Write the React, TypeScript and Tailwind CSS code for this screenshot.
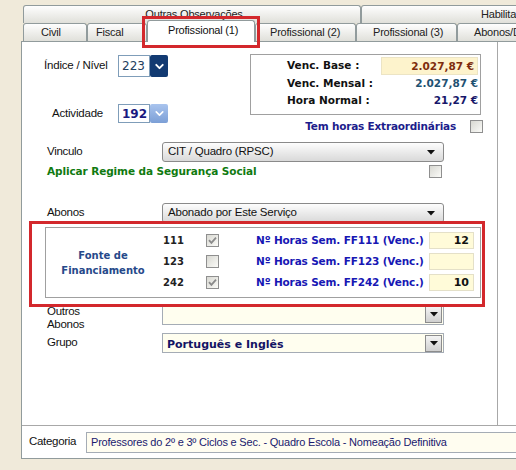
import { ChevronDown } from 'lucide-react'

const sans = "font-['Liberation_Sans',Arial,sans-serif]"
const bold = "font-['DejaVu_Sans',Verdana,sans-serif] font-bold"

function Check({ checked }: { checked?: boolean }) {
  return (
    <div className="w-[13px] h-[13px] shrink-0 border border-[#8f8f8f] bg-linear-to-br from-[#d8d8d2] to-[#fbfbf8] flex items-center justify-center">
      {checked && (
        <svg width="9" height="9" viewBox="0 0 9 9">
          <path d="M1 4.2 L3.4 6.8 L8 1.6" stroke="#8a8a8a" strokeWidth="1.8" fill="none" />
        </svg>
      )}
    </div>
  )
}

function Tri() {
  return (
    <svg width="8" height="5" viewBox="0 0 8 5">
      <path d="M0 0 H8 L4 4.5 Z" fill="#111" />
    </svg>
  )
}

// rounded XP-style combo (Vinculo / Abonos)
function XpCombo({ text }: { text: string }) {
  return (
    <div className={`w-[282px] h-full rounded-[3px] border border-[#8a8a8a] bg-linear-to-b from-[#fdfdfd] to-[#d9d9d9] flex items-center pl-[5px] pr-[8px] text-[11.5px] tracking-[-0.2px] text-[#111] ${sans}`}>
      <span className="flex-1">{text}</span>
      <Tri />
    </div>
  )
}

// flat combo with square button (Outros Abonos / Grupo)
function FlatCombo({ children }: { children?: React.ReactNode }) {
  return (
    <div className="w-[282px] h-full border border-[#a5acb5] bg-[#fffeef] flex items-center pl-[4px] pr-[1px]">
      <div className="flex-1">{children}</div>
      <div className="w-[17px] h-[17px] border border-[#8c8c8c] bg-linear-to-b from-[#f4f4f4] to-[#d0d0d0] flex items-center justify-center">
        <Tri />
      </div>
    </div>
  )
}

function Tab({ label, w, pl }: { label: string; w: string; pl: string }) {
  return (
    <div className={`${w} ${pl} h-full shrink-0 border border-b-0 border-[#919b9c] rounded-t-[3px] bg-linear-to-b from-[#fefefe] to-[#e0e0da] text-[11px] tracking-[-0.2px] text-[#222] leading-[17px] whitespace-nowrap`}>
      {label}
    </div>
  )
}

function HoursRow({ ff, checked, value }: { ff: string; checked: boolean; value: string }) {
  return (
    <div className="flex items-center h-[21px]">
      <span className={`w-[46px] pl-[3px] text-[10px] text-[#222] ${bold}`}>{ff}</span>
      <Check checked={checked} />
      <span className={`ml-[37px] w-[173px] text-[10.5px] tracking-[-0.15px] text-[#1717b4] ${bold}`}>Nº Horas Sem. FF{ff} (Venc.)</span>
      <div className={`w-[45px] h-[17px] border border-[#e4e0c8] bg-[#fffbd9] text-right pr-[4px] text-[11px] leading-[15px] text-[#111] ${bold}`}>{value}</div>
    </div>
  )
}

export default function App() {
  return (
    <div className={`w-[516px] h-[470px] overflow-hidden bg-[#f0eada] pt-[5px] pl-[21px] ${sans}`}>
      {/* back tab row */}
      <div className="flex h-[18px] pl-[2px]">
        <div className="w-[338px] shrink-0 border border-b-0 border-[#919b9c] rounded-t-[3px] bg-linear-to-b from-[#fefefe] to-[#e0e0da] text-center text-[11px] tracking-[-0.2px] leading-[16px] text-[#222] pl-[4px]">
          Outras Observações
        </div>
        <div className="w-[338px] shrink-0 border border-b-0 border-[#919b9c] rounded-t-[3px] bg-linear-to-b from-[#fefefe] to-[#e0e0da] text-[11px] tracking-[-0.2px] leading-[16px] text-[#222] pl-[119px]">
          Habilitações
        </div>
      </div>
      {/* front tab row */}
      <div className="flex h-[18px] pl-[2px]">
        <Tab label="Civil" w="w-[64px]" pl="pl-[17px]" />
        <Tab label="Fiscal" w="w-[60px]" pl="pl-[8px]" />
        <div className="relative z-10 -mt-[3px] h-[22px] w-[108px] shrink-0 border border-b-0 border-[#919b9c] rounded-t-[3px] bg-white pl-[20px] text-[11px] tracking-[-0.2px] leading-[19px] text-[#111]">
          Profissional (1)
          <div className="absolute -left-[6px] -right-[6px] -top-[5px] -bottom-[6px] border-[3px] border-[#d3282c]" />
        </div>
        <Tab label="Profissional (2)" w="w-[101px]" pl="pl-[14px]" />
        <Tab label="Profissional (3)" w="w-[101px]" pl="pl-[16px]" />
        <Tab label="Abonos/Descontos" w="w-[101px]" pl="pl-[16px]" />
      </div>

      {/* panel */}
      <div className="w-[520px] h-[418px] border border-[#919b9c] bg-white flex flex-col">
        <div className="h-[384px] border-b border-[#a8a8a8] flex">
          <div className="relative w-[476px] h-full border-r border-[#a8a8a8]">
            {/* indice / actividade + vencimentos */}
            <div className="flex items-start h-[61px] mt-[12px]">
              <div className="w-[228px]">
                <div className="flex items-center h-[22px] mt-[1px]">
                  <span className="w-[96px] pl-[22px] text-[11.5px] tracking-[-0.2px] text-[#111]">Índice / Nível</span>
                  <div className="w-[32px] h-full border border-[#7f9db9] flex items-center pl-[3px] text-[12px] text-[#23405e] font-['DejaVu_Sans',sans-serif]">223</div>
                  <div className="w-[18px] h-full bg-[#123a72] rounded-[2px] flex items-center justify-center">
                    <ChevronDown size={13} color="#fff" strokeWidth={3.5} />
                  </div>
                </div>
                <div className="flex items-center h-[19px] mt-[27px]">
                  <span className="w-[96px] pl-[30px] text-[11.5px] tracking-[-0.2px] text-[#111]">Actividade</span>
                  <div className={`w-[32px] h-full border border-[#7f9db9] flex items-center pl-[3px] text-[12px] text-[#1a1a80] ${bold}`}>192</div>
                  <div className="w-[18px] h-full bg-linear-to-b from-[#a9c4ee] to-[#7c9fd6] rounded-[2px] flex items-center justify-center">
                    <ChevronDown size={13} color="#fff" strokeWidth={3} />
                  </div>
                </div>
              </div>
              <div className="w-[231px] h-[61px] border border-[#a0a0a0] pl-[36px] pt-[2px]">
                <div className={`grid grid-cols-[94px_97px] grid-rows-[18px_17px_18px] items-center text-[10.5px] ${bold}`}>
                  <span className="text-[#111]">Venc. Base :</span>
                  <div className="h-full bg-[#fdf3cc] border border-[#ece4c4] text-right pr-[3px] leading-[16px] text-[#7e2c0c]">2.027,87 €</div>
                  <span className="text-[#111]">Venc. Mensal :</span>
                  <span className="text-right text-[#1f5272]">2.027,87 €</span>
                  <span className="text-[#111]">Hora Normal :</span>
                  <span className="text-right text-[#17176a]">21,27 €</span>
                </div>
              </div>
            </div>

            <div className="flex justify-end items-center h-[13px] mt-[5px] pr-[14px]">
              <span className={`mr-[14px] text-[10.5px] tracking-[-0.2px] text-[#1c1c8c] ${bold}`}>Tem horas Extraordinárias</span>
              <Check />
            </div>

            <div className="flex items-center h-[20px] mt-[9px]">
              <span className="w-[140px] pl-[25px] text-[11.5px] tracking-[-0.3px] text-[#111]">Vinculo</span>
              <XpCombo text="CIT / Quadro (RPSC)" />
            </div>

            <div className="flex items-center h-[13px] mt-[3px] pr-[55px]">
              <span className={`pl-[25px] flex-1 text-[10.5px] tracking-[-0.1px] text-[#107a10] ${bold}`}>Aplicar Regime da Segurança Social</span>
              <Check />
            </div>

            <div className="flex items-center h-[20px] mt-[25px]">
              <span className="w-[140px] pl-[25px] text-[11.5px] tracking-[-0.3px] text-[#111]">Abonos</span>
              <XpCombo text="Abonado por Este Serviço" />
            </div>

            {/* fonte de financiamento */}
            <div className="flex mt-[4px] ml-[23px] w-[436px] h-[71px] border border-[#a0a0a0]">
              <div className={`w-[114px] flex items-center justify-center text-center text-[10px] leading-[15px] text-[#26498a] ${bold}`}>
                Fonte de<br />Financiamento
              </div>
              <div className="pt-[2px]">
                <HoursRow ff="111" checked value="12" />
                <HoursRow ff="123" checked={false} value="" />
                <HoursRow ff="242" checked value="10" />
              </div>
            </div>

            <div className="flex h-[21px] mt-[6px]">
              <span className="w-[140px] pl-[25px] text-[11.5px] tracking-[-0.3px] leading-[13px] text-[#111] pt-[1px]">Outros<br />Abonos</span>
              <FlatCombo />
            </div>

            <div className="flex items-center h-[20px] mt-[8px]">
              <span className="w-[140px] pl-[25px] text-[11.5px] tracking-[-0.3px] text-[#111]">Grupo</span>
              <FlatCombo>
                <span className={`text-[11px] text-[#141464] ${bold}`}>Português e Inglês</span>
              </FlatCombo>
            </div>

            {/* annotation frame */}
            <div className="absolute left-[7px] top-[179px] w-[456px] h-[86px] border-[3px] border-[#d3282c]" />
          </div>
        </div>

        <div className="flex items-center h-[32px]">
          <span className="w-[64px] pl-[7px] text-[11.5px] tracking-[-0.3px] text-[#111]">Categoria</span>
          <div className="flex-1 h-[21px] border border-[#a5acb5] bg-[#fffdf0] pl-[4px] text-[11px] tracking-[-0.2px] leading-[19px] text-[#1a1a6e] whitespace-nowrap overflow-hidden">
            Professores do 2º e 3º Ciclos e Sec. - Quadro Escola - Nomeação Definitiva
          </div>
        </div>
      </div>
    </div>
  )
}
